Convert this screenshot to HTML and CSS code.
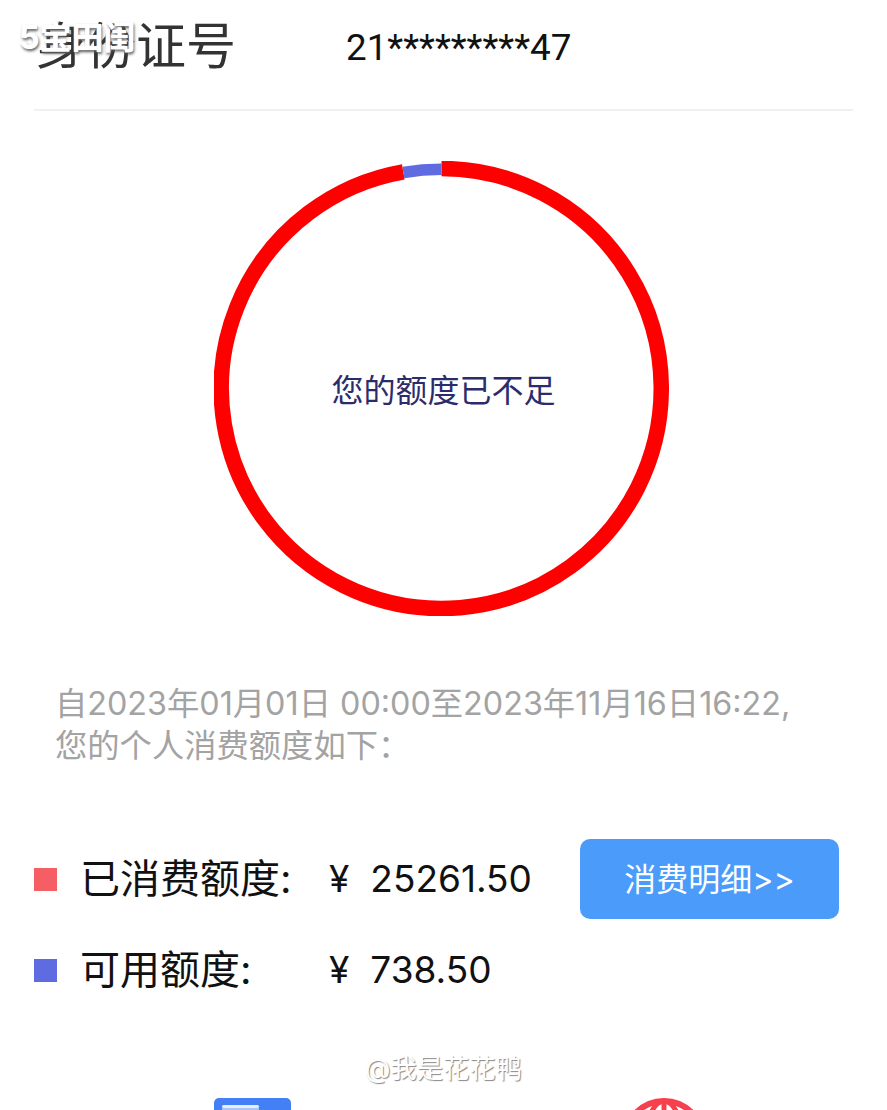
FILE: index.html
```html
<!DOCTYPE html>
<html lang="zh-CN">
<head>
    <meta charset="UTF-8">
    <meta name="viewport" content="width=device-width, initial-scale=1.0">
    <title>个人消费额度</title>
    <link rel="stylesheet" href="styles.css">
</head>
<body>
    <div class="corner-mark">5宝田闺</div>

    <header class="id-row">
        <span class="id-label">身份证号</span>
        <span class="id-value">21*********47</span>
    </header>

    <section class="ring-wrap">
        <svg class="ring" width="455" height="455" viewBox="0 0 455 455">
            <path d="M227.5 7.5 A220 220 0 1 1 189.3 10.8" fill="none" stroke="#ff0000" stroke-width="15.5"/>
            <path d="M227.5 8.2 A219.3 219.3 0 0 0 189.4 11.5" fill="none" stroke="#5f6be0" stroke-width="11.5"/>
        </svg>
        <p class="ring-text">您的额度已不足</p>
    </section>

    <p class="period">自2023年01月01日 00:00至2023年11月16日16:22,<br>您的个人消费额度如下：</p>

    <section class="quota">
        <div class="quota-row">
            <span class="swatch swatch-used"></span>
            <span class="quota-label">已消费额度:</span>
            <span class="quota-value"><span class="yen">¥</span>25261.50</span>
            <button class="detail-btn" type="button">消费明细&gt;&gt;</button>
        </div>
        <div class="quota-row">
            <span class="swatch swatch-free"></span>
            <span class="quota-label">可用额度:</span>
            <span class="quota-value"><span class="yen">¥</span>738.50</span>
        </div>
    </section>

    <nav class="bottom-icons">
        <svg class="icon-card" width="77" height="40" viewBox="0 0 77 40">
            <rect width="77" height="40" rx="5" fill="#4480f5"/>
            <rect x="8" y="7" width="37" height="3" rx="1.5" fill="#e6eefe"/>
            <rect x="8" y="10" width="37" height="3" fill="#a9c5fa"/>
        </svg>
        <svg class="icon-globe" width="84" height="40" viewBox="0 0 84 40">
            <circle cx="42" cy="42" r="39" fill="none" stroke="#f7404e" stroke-width="6"/>
            <ellipse cx="42" cy="42" rx="18" ry="39" fill="none" stroke="#f7404e" stroke-width="5"/>
            <path d="M42 3V40" stroke="#f7404e" stroke-width="5"/>
        </svg>
    </nav>

    <div class="weibo-mark">@我是花花鸭</div>
</body>
</html>
```

FILE: styles.css
```css
html,
body {
    height: 1110px;
    overflow: hidden;
}

body {
    position: relative;
    margin: 0;
    padding: 0 34px;
    box-sizing: border-box;
    background-color: #fff;
    color: #111;
    font-family: Inter, "Noto Sans CJK SC", sans-serif;
}

.id-row {
    display: flex;
    align-items: center;
    height: 94px;
    padding-left: 2px;
    padding-bottom: 15px;
    border-bottom: 2px solid #f0f0f0;
    margin-bottom: 50px;
}

.id-label {
    width: 310px;
    margin-bottom: 10px;
    font-size: 50px;
    color: #333;
}

.id-value {
    font-family: Roboto, "Noto Sans CJK SC", sans-serif;
    font-size: 36.8px;
    color: #111;
}

.ring-wrap {
    display: grid;
    justify-items: center;
    align-items: center;
}

.ring,
.ring-text {
    grid-area: 1 / 1;
}

.ring {
    display: block;
    margin-right: 4px;
}

.ring-text {
    margin: 0 0 2px;
    font-size: 32px;
    color: #2c2c6c;
}

.period {
    margin: 67px 0 0;
    padding-left: 21px;
    font-size: 32.3px;
    line-height: 42px;
    color: #a3a3a3;
}

.quota {
    margin-top: 72px;
}

.quota-row {
    display: flex;
    align-items: center;
    height: 80px;
    margin-bottom: 11px;
}

.swatch {
    width: 23px;
    height: 23px;
    margin-top: 1px;
    margin-right: 23px;
}

.swatch-used {
    background-color: #f55f63;
}

.swatch-free {
    background-color: #5f6be0;
}

.quota-label {
    width: 249px;
    margin-bottom: 6px;
    font-size: 40px;
    color: #111;
}

.quota-value {
    width: 251px;
    margin-bottom: 2px;
    font-size: 37px;
}

.yen {
    margin-right: 21px;
}

.detail-btn {
    width: 259px;
    height: 80px;
    padding: 0 0 5px;
    border: none;
    border-radius: 10px;
    background-color: #4a9bfa;
    color: #fff;
    font-family: inherit;
    font-size: 32px;
}

.bottom-icons {
    position: absolute;
    top: 1098px;
    left: 214px;
    display: flex;
    gap: 331px;
}

.corner-mark {
    position: absolute;
    top: 12px;
    left: 19px;
    z-index: 2;
    font-size: 32px;
    font-weight: 700;
    color: #fff;
    text-shadow: 0 0 1px #fff, 1px 2px 3px #555;
}

.weibo-mark {
    position: absolute;
    top: 1047px;
    left: 365px;
    font-size: 26.3px;
    color: #fff;
    text-shadow: 1px 1px 1px #888;
}
```
